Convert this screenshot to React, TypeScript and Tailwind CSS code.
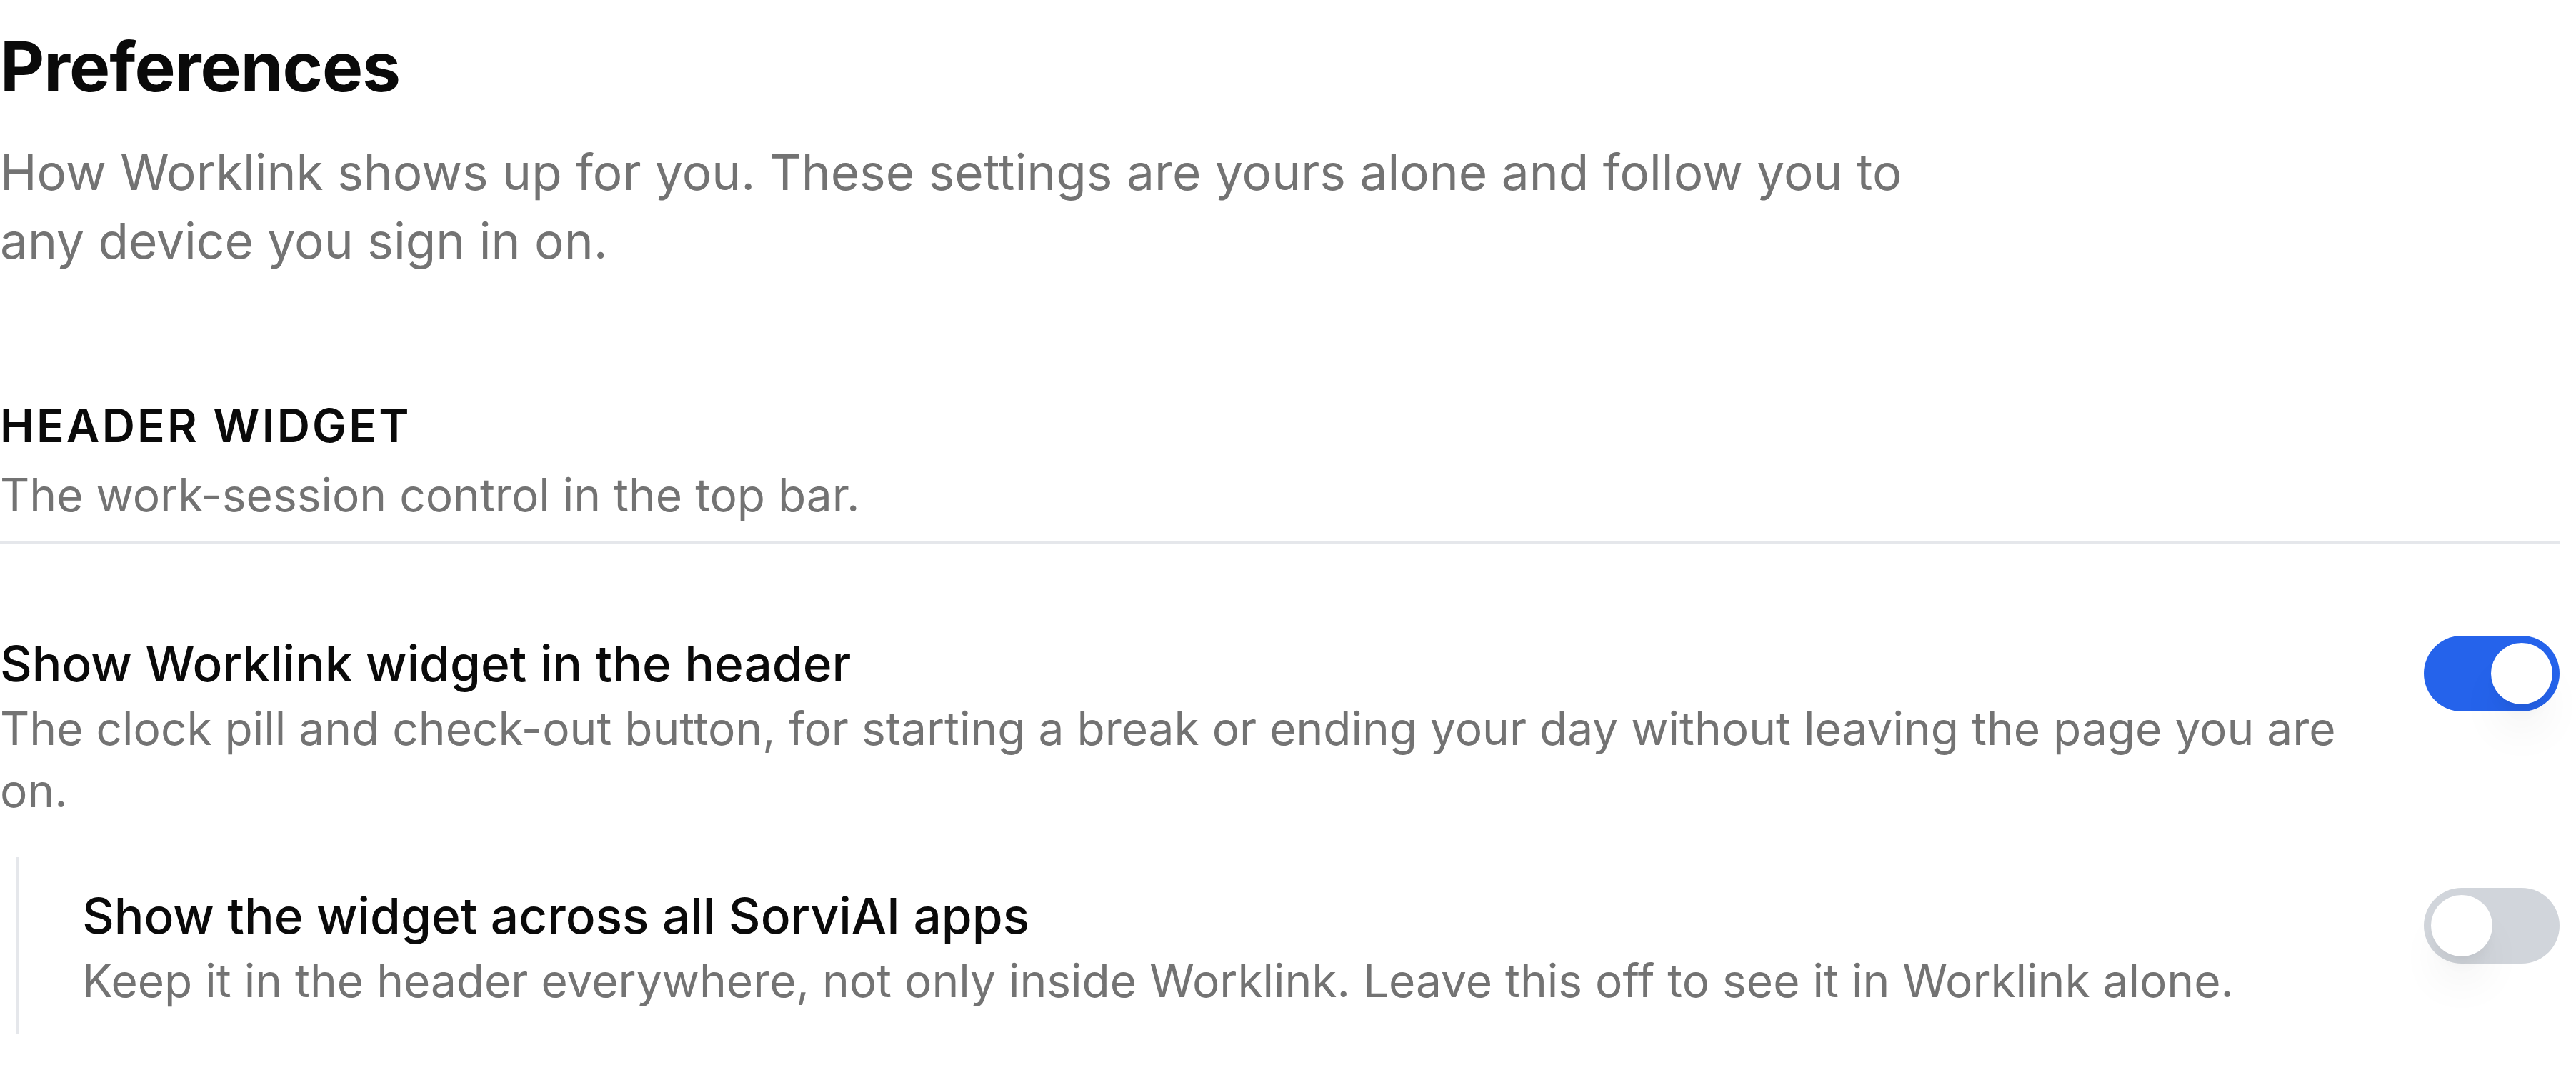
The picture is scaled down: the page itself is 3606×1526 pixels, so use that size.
import clsx from "clsx";

function Toggle({ on }: { on: boolean }) {
  return (
    <button
      type="button"
      role="switch"
      aria-checked={on}
      className={clsx(
        "mt-[8px] flex h-[106px] w-[190px] shrink-0 items-center rounded-full p-[10px]",
        on ? "justify-end bg-[#2563eb]" : "justify-start bg-[#d1d5db]"
      )}
    >
      <span className="h-[86px] w-[86px] rounded-full bg-white shadow-[0_44px_65px_-13px_rgba(0,0,0,0.08),0_17px_26px_-17px_rgba(0,0,0,0.12)]" />
    </button>
  );
}

export default function App() {
  return (
    <div className="min-h-screen w-full bg-white text-[#0a0a0a] [font-family:Inter,'Noto_Sans',sans-serif]">
      <div className="w-[3583px] pt-[33px]">
        <h1 className="text-[96px] font-bold leading-[120px] tracking-[-0.01em]">
          Preferences
        </h1>
        <p className="mt-[40px] max-w-[2720px] text-[69.4px] leading-[96px] text-[#737373]">
          How Worklink shows up for you. These settings are yours alone and
          follow you to any device you sign in on.
        </p>

        <section className="mt-[167px]">
          <div className="border-b-[5px] border-[#e5e7eb] pb-[21px]">
            <h2 className="text-[64px] font-semibold uppercase leading-[88px] tracking-[0.05em]">
              Header widget
            </h2>
            <p className="mt-[9px] text-[64px] leading-[87px] text-[#737373]">
              The work-session control in the top bar.
            </p>
          </div>

          <div className="mt-[120px] flex items-start justify-between gap-[70px]">
            <div className="min-w-0 flex-1">
              <h3 className="text-[69.4px] font-medium leading-[94px]">
                Show Worklink widget in the header
              </h3>
              <p className="text-[64px] leading-[87px] text-[#737373]">
                The clock pill and check-out button, for starting a break or
                ending your day without leaving the page you are on.
              </p>
            </div>
            <Toggle on />
          </div>

          <div className="ml-[22px] mt-[50px] flex items-start justify-between gap-[70px] border-l-[5px] border-[#e5e7eb] pb-[32px] pl-[88px] pt-[35px]">
            <div className="min-w-0 flex-1">
              <h3 className="text-[69.4px] font-medium leading-[94px]">
                Show the widget across all SorviAI apps
              </h3>
              <p className="text-[64px] leading-[87px] text-[#737373]">
                Keep it in the header everywhere, not only inside Worklink.
                Leave this off to see it in Worklink alone.
              </p>
            </div>
            <Toggle on={false} />
          </div>
        </section>
      </div>
    </div>
  );
}
